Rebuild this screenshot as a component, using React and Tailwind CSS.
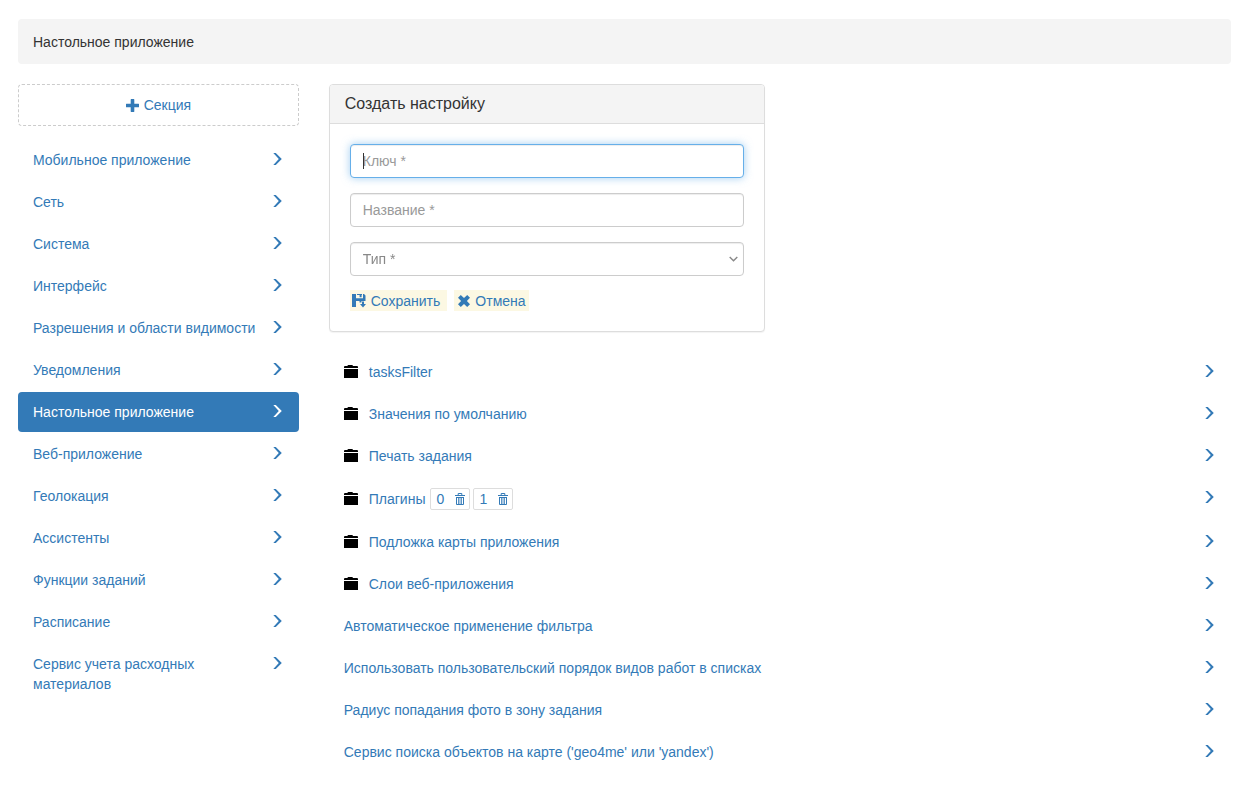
import { useState } from "react";
import clsx from "clsx";

const sections = [
  "Мобильное приложение",
  "Сеть",
  "Система",
  "Интерфейс",
  "Разрешения и области видимости",
  "Уведомления",
  "Настольное приложение",
  "Веб-приложение",
  "Геолокация",
  "Ассистенты",
  "Функции заданий",
  "Расписание",
  "Сервис учета расходных материалов",
];

const settings = [
  { title: "tasksFilter", folder: true },
  { title: "Значения по умолчанию", folder: true },
  { title: "Печать задания", folder: true },
  { title: "Плагины", folder: true, items: ["0", "1"] },
  { title: "Подложка карты приложения", folder: true },
  { title: "Слои веб-приложения", folder: true },
  { title: "Автоматическое применение фильтра" },
  { title: "Использовать пользовательский порядок видов работ в списках" },
  { title: "Радиус попадания фото в зону задания" },
  { title: "Сервис поиска объектов на карте ('geo4me' или 'yandex')" },
];

const field =
  "block h-[34px] w-full rounded border border-[#ccc] bg-white px-3 text-sm text-[#555] shadow-[inset_0_1px_1px_rgba(0,0,0,0.075)] outline-none placeholder:text-[#999] focus:border-[#66afe9] focus:shadow-[inset_0_1px_1px_rgba(0,0,0,0.075),0_0_8px_rgba(102,175,233,0.6)]";

const ChevronIcon = () => (
  <svg className="mt-[3px] mr-0.5 h-3 w-[9px] shrink-0" viewBox="0 0 9 12" fill="currentColor" aria-hidden="true">
    <path d="M0.3 0H2.8L8.8 6L2.8 12H0.3L5.8 6Z" />
  </svg>
);

const PlusIcon = () => (
  <svg className="h-[13px] w-[13px]" viewBox="0 0 13 13" fill="currentColor" aria-hidden="true">
    <path d="M4.7 0.4Q4.7 0 5.1 0H7.9Q8.3 0 8.3 0.4V4.7H12.6Q13 4.7 13 5.1V7.9Q13 8.3 12.6 8.3H8.3V12.6Q8.3 13 7.9 13H5.1Q4.7 13 4.7 12.6V8.3H0.4Q0 8.3 0 7.9V5.1Q0 4.7 0.4 4.7H4.7Z" />
  </svg>
);

const SaveIcon = () => (
  <svg className="h-3.5 w-3.5" viewBox="0 0 14 14" fill="currentColor" aria-hidden="true">
    <path d="M0 0H4V4.3H11V0H12L13.5 1.5V7H9.5V8.5H7.5V7H4V13H0Z" />
    <path d="M5 0H10V1H9.6V3.3H7.6V1H5Z" />
    <path d="M10 7.5H12V10H14L11 13.5L8 10H10Z" />
  </svg>
);

const RemoveIcon = () => (
  <svg className="h-3 w-3" viewBox="0 0 12 12" fill="currentColor" aria-hidden="true">
    <path d="M2.8 0L6 3.1L9.2 0L12 2.8L8.9 6L12 9.2L9.2 12L6 8.9L2.8 12L0 9.2L3.1 6L0 2.8Z" />
  </svg>
);

const FolderIcon = () => (
  <svg className="mr-[11px] h-3.5 w-3.5 shrink-0 self-center text-black" viewBox="0 0 14 14" fill="currentColor" aria-hidden="true">
    <path d="M0 3V2Q0 1 1 1H3.4Q3.6 0 4.4 0H8Q8.8 0 9 1H13Q14 1 14 2V3ZM0 4H14V13H0Z" />
  </svg>
);

const TrashIcon = () => (
  <svg className="h-3 w-[10px]" viewBox="0 0 10 12" fill="none" stroke="currentColor" aria-hidden="true">
    <path d="M3.2 2V0.5H6.8V2M0 2.5H10" />
    <path d="M1.5 4V11.5H8.5V4M1 4.5H9" />
    <path d="M3.5 5V11M5 5V11M6.5 5V11" strokeWidth="0.8" />
  </svg>
);

const Setting = ({ title, folder, items }) => (
  <li className="mb-0.5 flex items-start px-[15px] py-2.5 text-[#337ab7]">
    {folder && <FolderIcon />}
    <div className="flex min-w-0 grow flex-wrap items-center gap-x-1">
      <a href="#">{title}</a>
      {items && (
        <div className="flex gap-[3px]">
          {items.map((item) => (
            <div key={item} className="flex h-[22px] w-10 rounded-xs border border-[#ddd]">
              <button type="button" className="w-5">
                {item}
              </button>
              <button type="button" aria-label={`Удалить ${item}`} className="flex grow items-center justify-center">
                <TrashIcon />
              </button>
            </div>
          ))}
        </div>
      )}
    </div>
    <ChevronIcon />
  </li>
);

const CreateForm = () => {
  const [key, setKey] = useState("");
  const [name, setName] = useState("");
  const [type, setType] = useState("");

  return (
    <form
      onSubmit={(e) => e.preventDefault()}
      className="rounded border border-[#ddd] bg-white shadow-[0_1px_1px_rgba(0,0,0,0.05)]"
    >
      <h3 className="rounded-t-[3px] border-b border-[#ddd] bg-[#f4f4f4] px-[15px] py-2.5 text-base leading-[18px]">
        Создать настройку
      </h3>
      <div className="p-5">
        <div className="relative mb-[15px]">
          <input
            autoFocus
            aria-label="Ключ"
            placeholder="Ключ *"
            value={key}
            onChange={(e) => setKey(e.target.value)}
            className={clsx(field, !key && "caret-transparent")}
          />
          {!key && <span className="absolute top-[9px] left-[13px] h-4 w-px bg-[#333]" />}
        </div>
        <input
          aria-label="Название"
          placeholder="Название *"
          value={name}
          onChange={(e) => setName(e.target.value)}
          className={clsx(field, "mb-[15px]")}
        />
        <div className="relative mb-3.5">
          <select
            aria-label="Тип"
            value={type}
            onChange={(e) => setType(e.target.value)}
            className={clsx(field, "appearance-none", !type && "text-[#888]")}
          >
            <option value="">Тип *</option>
          </select>
          <svg
            className="pointer-events-none absolute top-3.5 right-1.5 h-[6px] w-[9px] text-[#888]"
            viewBox="0 0 9 6"
            fill="none"
            stroke="currentColor"
            strokeWidth="1.4"
            aria-hidden="true"
          >
            <path d="M0.7 0.9L4.5 4.7L8.3 0.9" />
          </svg>
        </div>
        <div className="flex gap-[7px] text-[#337ab7]">
          <button type="submit" className="flex h-[21px] items-center gap-[5px] bg-[#fcf8e3] pr-[7px] pl-0.5">
            <SaveIcon />
            Сохранить
          </button>
          <button type="button" className="flex h-[21px] items-center gap-[5px] bg-[#fcf8e3] pr-[3px] pl-1">
            <RemoveIcon />
            Отмена
          </button>
        </div>
      </div>
    </form>
  );
};

const App = () => {
  const [active, setActive] = useState("Настольное приложение");

  return (
    <div className="px-[18px] pt-[19px] pb-6 font-['Liberation_Sans',Arial,sans-serif] text-sm leading-5 text-[#333]">
      <header className="mb-5 rounded bg-[#f4f4f4] px-[15px] pt-[13px] pb-3">{active}</header>
      <div className="grid grid-cols-4 gap-x-[30px]">
        <aside>
          <button
            type="button"
            className="mb-3.5 flex h-[42px] w-full items-center justify-center gap-[5px] rounded border border-dashed border-[#ccc] text-[#337ab7]"
          >
            <PlusIcon />
            Секция
          </button>
          <nav className="flex flex-col gap-0.5">
            {sections.map((section) => (
              <a
                key={section}
                href="#"
                onClick={() => setActive(section)}
                className={clsx(
                  "flex items-start justify-between gap-3 rounded px-[15px] py-2.5",
                  section === active ? "bg-[#337ab7] text-white" : "text-[#337ab7]"
                )}
              >
                {section}
                <ChevronIcon />
              </a>
            ))}
          </nav>
        </aside>
        <main className="col-span-3">
          <div className="mb-5 grid grid-cols-2 gap-x-[30px]">
            <CreateForm />
          </div>
          <ul>
            {settings.map((setting) => (
              <Setting key={setting.title} {...setting} />
            ))}
          </ul>
        </main>
      </div>
    </div>
  );
};

export default App;
